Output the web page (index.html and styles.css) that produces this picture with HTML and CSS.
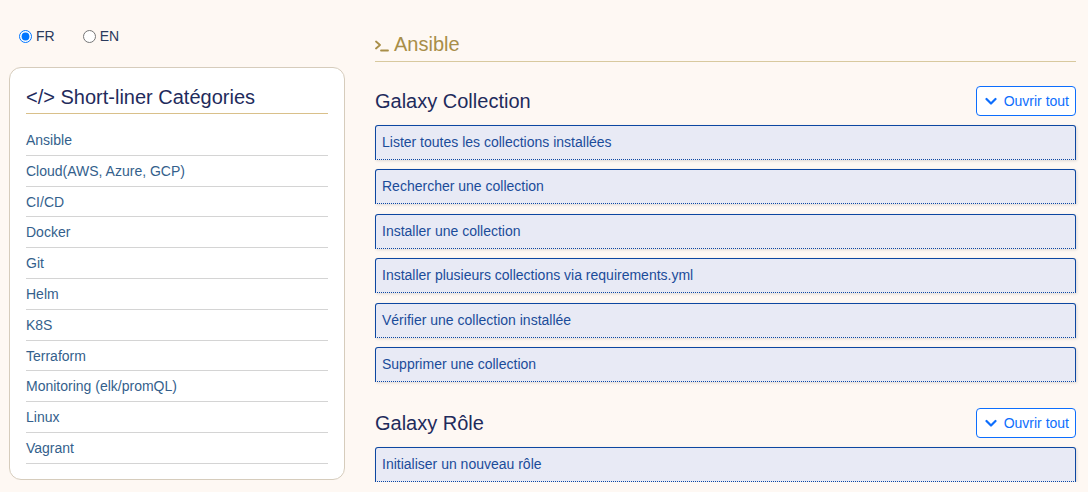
FILE: index.html
```html
<!DOCTYPE html>
<html lang="fr">

<head>
    <meta charset="UTF-8">
    <meta name="viewport" content="width=device-width, initial-scale=1.0">
    <title>Short-liner - Ansible</title>
    <link rel="stylesheet" href="styles.css">
</head>

<body>
    <div class="page">
        <aside class="sidebar">
            <form class="lang">
                <label><input type="radio" name="lang" value="fr" checked>FR</label>
                <label><input type="radio" name="lang" value="en">EN</label>
            </form>
            <nav class="card">
                <h2 class="card__title">&lt;/&gt; Short-liner Catégories</h2>
                <ul class="cat-list">
                    <li><a href="#">Ansible</a></li>
                    <li><a href="#">Cloud(AWS, Azure, GCP)</a></li>
                    <li><a href="#">CI/CD</a></li>
                    <li><a href="#">Docker</a></li>
                    <li><a href="#">Git</a></li>
                    <li><a href="#">Helm</a></li>
                    <li><a href="#">K8S</a></li>
                    <li><a href="#">Terraform</a></li>
                    <li><a href="#">Monitoring (elk/promQL)</a></li>
                    <li><a href="#">Linux</a></li>
                    <li><a href="#">Vagrant</a></li>
                </ul>
            </nav>
        </aside>

        <main class="content">
            <h1 class="topic">
                <svg class="topic__icon" width="14" height="12" viewBox="0 0 14 12">
                    <path d="M1 1.5 L5 5 L1 8.5" fill="none" stroke="currentColor" stroke-width="1.8" stroke-linecap="round" stroke-linejoin="round"/>
                    <path d="M6 10.5 H13" stroke="currentColor" stroke-width="1.8" stroke-linecap="round"/>
                </svg>
                Ansible
            </h1>

            <section class="group">
                <div class="group__head">
                    <h2>Galaxy Collection</h2>
                    <button class="btn">
                        <svg width="12" height="12" viewBox="0 0 12 12"><path d="M1.5 4 L6 8.5 L10.5 4" fill="none" stroke="currentColor" stroke-width="2.2" stroke-linecap="round" stroke-linejoin="round"/></svg>
                        Ouvrir tout
                    </button>
                </div>
                <div class="items">
                    <details class="item"><summary>Lister toutes les collections installées</summary></details>
                    <details class="item"><summary>Rechercher une collection</summary></details>
                    <details class="item"><summary>Installer une collection</summary></details>
                    <details class="item"><summary>Installer plusieurs collections via requirements.yml</summary></details>
                    <details class="item"><summary>Vérifier une collection installée</summary></details>
                    <details class="item"><summary>Supprimer une collection</summary></details>
                </div>
            </section>

            <section class="group group--next">
                <div class="group__head">
                    <h2>Galaxy Rôle</h2>
                    <button class="btn">
                        <svg width="12" height="12" viewBox="0 0 12 12"><path d="M1.5 4 L6 8.5 L10.5 4" fill="none" stroke="currentColor" stroke-width="2.2" stroke-linecap="round" stroke-linejoin="round"/></svg>
                        Ouvrir tout
                    </button>
                </div>
                <div class="items">
                    <details class="item"><summary>Initialiser un nouveau rôle</summary></details>
                </div>
            </section>
        </main>
    </div>
</body>
</html>
```

FILE: styles.css
```css
body {
    margin: 0;
    background-color: #fef8f3;
    font-family: "Liberation Sans", Arial, sans-serif;
    font-size: 14px;
    color: #1f2b5c;
}

.page {
    display: grid;
    grid-template-columns: 336px 1fr;
    column-gap: 30px;
    padding: 0 12px 0 9px;
}

/* left side */

.sidebar {
    padding-top: 28px;
}

.lang {
    display: flex;
    gap: 28px;
    padding-left: 10px;
    line-height: 16px;
}

.lang label {
    display: flex;
    align-items: center;
    color: #2b3a5c;
}

.lang input {
    width: 13px;
    height: 13px;
    margin: 0 4px 0 0;
}

.card {
    margin-top: 23px;
    padding: 17px 16px 15px 16px;
    background-color: #fff;
    border: 1px solid #d6ccbc;
    border-radius: 12px;
}

.card__title {
    margin: 0;
    padding-bottom: 4px;
    font-size: 20px;
    font-weight: normal;
    line-height: 24px;
    color: #1f2b5c;
    border-bottom: 1px solid #d9c08a;
}

.cat-list {
    list-style-type: none;
    margin: 11px 0 0;
    padding: 0;
}

.cat-list li {
    padding: 7px 0 6.8px;
    line-height: 16px;
    border-bottom: 1px solid #d4d4d4;
}

.cat-list a {
    color: #345f8c;
    text-decoration: none;
}

/* right side */

.content {
    padding-top: 32px;
}

.topic {
    display: flex;
    align-items: center;
    gap: 5px;
    margin: 0;
    padding-bottom: 5px;
    font-size: 20px;
    font-weight: normal;
    line-height: 24px;
    color: #a88e48;
    border-bottom: 1px solid #d8c99e;
}

.topic__icon {
    margin-top: 3px;
}

.group {
    margin-top: 24px;
}

.group--next {
    margin-top: 26px;
}

.group__head {
    display: flex;
    justify-content: space-between;
    align-items: center;
    height: 30px;
    margin-bottom: 9px;
}

.group__head h2 {
    margin: 0;
    font-size: 20px;
    font-weight: normal;
    line-height: 24px;
    color: #1f2b5c;
}

.btn {
    display: flex;
    align-items: center;
    gap: 7px;
    height: 30px;
    padding: 0 6px 0 8px;
    font-family: inherit;
    font-size: 14px;
    color: #0d6efd;
    background-color: #fff;
    border: 1px solid #0d6efd;
    border-radius: 4px;
}

.items {
    display: flex;
    flex-direction: column;
    gap: 9.4px;
}

.item summary {
    display: block;
    padding: 8px 6px;
    line-height: 17px;
    color: #1b4c9a;
    background-color: #e8eaf5;
    border: 1px solid #0d47a1;
    border-bottom-style: dotted;
    border-radius: 3px 3px 0 0;
    box-shadow: 1px 1px 3px rgba(0, 0, 0, .12);
    list-style: none;
    cursor: pointer;
}

.item summary::-webkit-details-marker {
    display: none;
}
```
